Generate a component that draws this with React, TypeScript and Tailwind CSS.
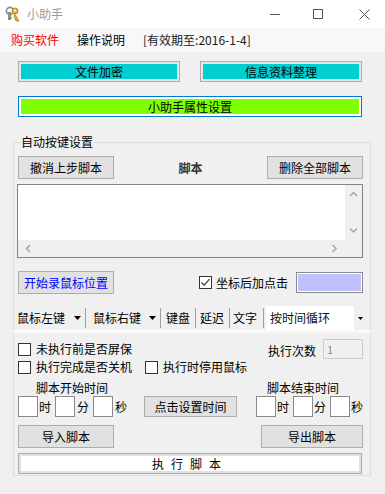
import React from "react";

function Btn({ w, h = 23, children, className = "" }: { w: number; h?: number; children: React.ReactNode; className?: string }) {
  return (
    <div
      className={`flex items-center justify-center border border-[#adadad] bg-[#e1e1e1] text-[12px] leading-none ${className}`}
      style={{ width: w, height: h }}
    >
      {children}
    </div>
  );
}

function Check({ checked = false }: { checked?: boolean }) {
  return (
    <div className="flex h-[13px] w-[13px] shrink-0 items-center justify-center border border-[#333] bg-white">
      {checked && (
        <svg width="11" height="11" viewBox="0 0 11 11">
          <polyline points="1.5,5.5 4.2,8.2 9.5,2.2" fill="none" stroke="#333" strokeWidth="1.2" />
        </svg>
      )}
    </div>
  );
}

function Caret() {
  return (
    <svg width="7" height="4" viewBox="0 0 7 4" className="shrink-0">
      <polygon points="0,0 7,0 3.5,4" fill="#000" />
    </svg>
  );
}

function Sep() {
  return <div className="h-[20px] w-px shrink-0 bg-[#a0a0a0]" />;
}

function TBox() {
  return <div className="h-[21px] w-[20px] shrink-0 border border-[#8a8a8a] bg-white" />;
}

function Chev({ dir }: { dir: "up" | "down" | "left" | "right" }) {
  const pts =
    dir === "up"
      ? "1,5 4.5,1.5 8,5"
      : dir === "down"
      ? "1,1.5 4.5,5 8,1.5"
      : dir === "left"
      ? "5,1 1.5,4.5 5,8"
      : "1.5,1 5,4.5 1.5,8";
  const vert = dir === "up" || dir === "down";
  return (
    <svg width={vert ? 9 : 7} height={vert ? 7 : 9} viewBox={vert ? "0 0 9 7" : "0 0 7 9"}>
      <polyline points={pts} fill="none" stroke="#a6a6a6" strokeWidth="1.5" />
    </svg>
  );
}

export default function App() {
  return (
    <div className="relative h-[494px] w-[385px] overflow-hidden bg-[#f0f0f0] font-['Noto_Sans_CJK_SC','Microsoft_YaHei',sans-serif] text-[12px] leading-none text-black">
      {/* title bar */}
      <div className="flex h-[28px] items-center bg-white">
        <svg width="16" height="16" viewBox="0 0 16 16" className="ml-[5px]">
          <circle cx="5" cy="5" r="3.6" fill="none" stroke="#8a8a8a" strokeWidth="1.6" />
          <rect x="3" y="6" width="3" height="8" fill="#8c8c8c" />
          <rect x="4" y="11" width="3" height="1.5" fill="#8c8c8c" />
          <circle cx="10" cy="5" r="3" fill="#e8b730" stroke="#a97b10" strokeWidth="0.8" />
          <circle cx="10" cy="4.5" r="1" fill="#fff" />
          <path d="M10 8 L14 15 L12 15.5 L11.5 14 L10.5 14.5 L9 9.5 Z" fill="#e0a820" stroke="#a97b10" strokeWidth="0.6" />
        </svg>
        <span className="ml-[6px] text-[12px] text-[#9a9a9a]">小助手</span>
        <div className="ml-auto flex items-center pr-[15px]">
          <div className="h-px w-[10px] bg-[#555]" />
          <div className="ml-[33px] h-[10px] w-[10px] border border-[#555]" />
          <svg width="11" height="11" viewBox="0 0 11 11" className="ml-[36px]">
            <path d="M0.5 0.5 L10.5 10.5 M10.5 0.5 L0.5 10.5" stroke="#555" strokeWidth="1" />
          </svg>
        </div>
      </div>

      {/* menu bar */}
      <div className="flex h-[24px] items-center gap-[18px] bg-[#f8f8f8] pl-[11px]">
        <span className="text-[#ff0000]">购买软件</span>
        <span>操作说明</span>
        <span className="text-[#1a1a1a]">[有效期至:2016-1-4]</span>
      </div>

      {/* top buttons */}
      <div className="ml-[18px] mt-[9px] flex w-[344px] justify-between">
        <div className="h-[21px] w-[162px] border border-[#adadad] bg-[#e6e6e6] p-[2px]">
          <div className="flex h-full items-center justify-center bg-[#00ced1] text-[12px]">文件加密</div>
        </div>
        <div className="h-[21px] w-[162px] border border-[#adadad] bg-[#e6e6e6] p-[2px]">
          <div className="flex h-full items-center justify-center bg-[#00ced1] text-[12px]">信息资料整理</div>
        </div>
      </div>
      <div className="ml-[18px] mt-[14px] h-[21px] w-[344px] border border-[#0078d7] bg-white p-[2px]">
        <div className="flex h-full items-center justify-center bg-[#7fff00] text-[12px]">小助手属性设置</div>
      </div>

      {/* group box */}
      <div className="relative ml-[13px] mt-[25px] h-[334px] w-[358px] border border-[#dcdcdc] pl-[4px] pr-[7px] pt-[13px]">
        <div className="absolute left-[6px] top-[-8px] h-[14px] bg-[#f0f0f0] px-px leading-[14px]">自动按键设置</div>

        <div className="flex h-[23px] items-center justify-between">
          <Btn w={96}>撤消上步脚本</Btn>
          <span className="font-bold text-[#333]">脚本</span>
          <Btn w={96}>删除全部脚本</Btn>
        </div>

        {/* text area */}
        <div className="-ml-px mt-[5px] flex h-[74px] w-[346px] flex-col border border-[#828282] bg-[#f0f0f0]">
          <div className="flex h-[55px]">
            <div className="w-[327px] bg-white" />
            <div className="flex w-[17px] flex-col items-center justify-between py-[6px]">
              <Chev dir="up" />
              <Chev dir="down" />
            </div>
          </div>
          <div className="flex h-[17px] w-[327px] items-center justify-between px-[7px]">
            <Chev dir="left" />
            <Chev dir="right" />
          </div>
        </div>

        {/* record row */}
        <div className="mt-[13px] flex h-[23px] items-center">
          <Btn w={96} className="text-[#0000ff]">开始录鼠标位置</Btn>
          <div className="ml-[85px] flex items-center">
            <Check checked />
            <span className="ml-[4px]">坐标后加点击</span>
          </div>
          <div className="ml-auto h-[21px] w-[67px] border border-[#8a8a8a] bg-white p-px">
            <div className="h-full bg-[#c0c0ff]" />
          </div>
        </div>

        {/* toolbar */}
        <div className="-ml-px mt-[12px] flex h-[24px] w-[349px] items-center">
          <span>鼠标左键</span>
          <span className="ml-[9px]"><Caret /></span>
          <span className="ml-[4px]"><Sep /></span>
          <span className="ml-[7px]">鼠标右键</span>
          <span className="ml-[8px]"><Caret /></span>
          <span className="ml-[4px]"><Sep /></span>
          <span className="ml-[5px]">键盘</span>
          <span className="ml-[5px]"><Sep /></span>
          <span className="ml-[4px]">延迟</span>
          <span className="ml-[5px]"><Sep /></span>
          <span className="ml-[3px]">文字</span>
          <span className="ml-[6px]"><Sep /></span>
          <div className="ml-[2px] flex h-[24px] flex-1 bg-white">
            <div className="flex flex-1 items-center pl-[4px] text-[#111]">按时间循环</div>
            <div className="flex w-[12px] items-center justify-center bg-[#f0f0f0]">
              <svg width="5" height="3" viewBox="0 0 5 3"><polygon points="0,0 5,0 2.5,3" fill="#000" /></svg>
            </div>
          </div>
        </div>
        <div className="-ml-[5px] h-[3px] w-[358px] bg-[#f9f9f9]" />

        {/* checkbox rows */}
        <div className="mt-[6px] flex h-[20px] items-center">
          <Check />
          <span className="ml-[5px]">未执行前是否屏保</span>
          <span className="ml-[136px] mt-[3px]">执行次数</span>
          <div className="ml-auto flex h-[20px] w-[40px] items-center border border-[#cccccc] bg-[#f0f0f0] pl-[3px] text-[11px] text-[#8a8a8a]">1</div>
        </div>
        <div className="mt-px flex h-[14px] items-center">
          <Check />
          <span className="ml-[5px]">执行完成是否关机</span>
          <span className="ml-[13px]"><Check /></span>
          <span className="ml-[5px]">执行时停用鼠标</span>
        </div>

        <div className="mt-[7px] flex h-[13px] items-center">
          <span className="ml-[18px]">脚本开始时间</span>
          <span className="ml-[159px]">脚本结束时间</span>
        </div>

        <div className="mt-[2px] flex h-[21px] items-center">
          <TBox />
          <span className="ml-px">时</span>
          <span className="ml-[4px]"><TBox /></span>
          <span className="ml-[2px]">分</span>
          <span className="ml-[4px]"><TBox /></span>
          <span className="ml-[2px]">秒</span>
          <Btn w={96} h={21} className="ml-[17px]">点击设置时间</Btn>
          <span className="ml-[19px]"><TBox /></span>
          <span className="ml-px">时</span>
          <span className="ml-[4px]"><TBox /></span>
          <span className="ml-px">分</span>
          <span className="ml-[4px]"><TBox /></span>
          <span className="ml-px">秒</span>
        </div>

        <div className="mt-[8px] flex h-[23px] items-center justify-between">
          <Btn w={96}>导入脚本</Btn>
          <Btn w={102}>导出脚本</Btn>
        </div>

        <div className="mt-[5px] h-[21px] w-[344px] border border-[#adadad] bg-[#e1e1e1] p-[2px]">
          <div className="flex h-full items-center justify-center bg-white tracking-[7px]">执行脚本</div>
        </div>
      </div>
    </div>
  );
}
